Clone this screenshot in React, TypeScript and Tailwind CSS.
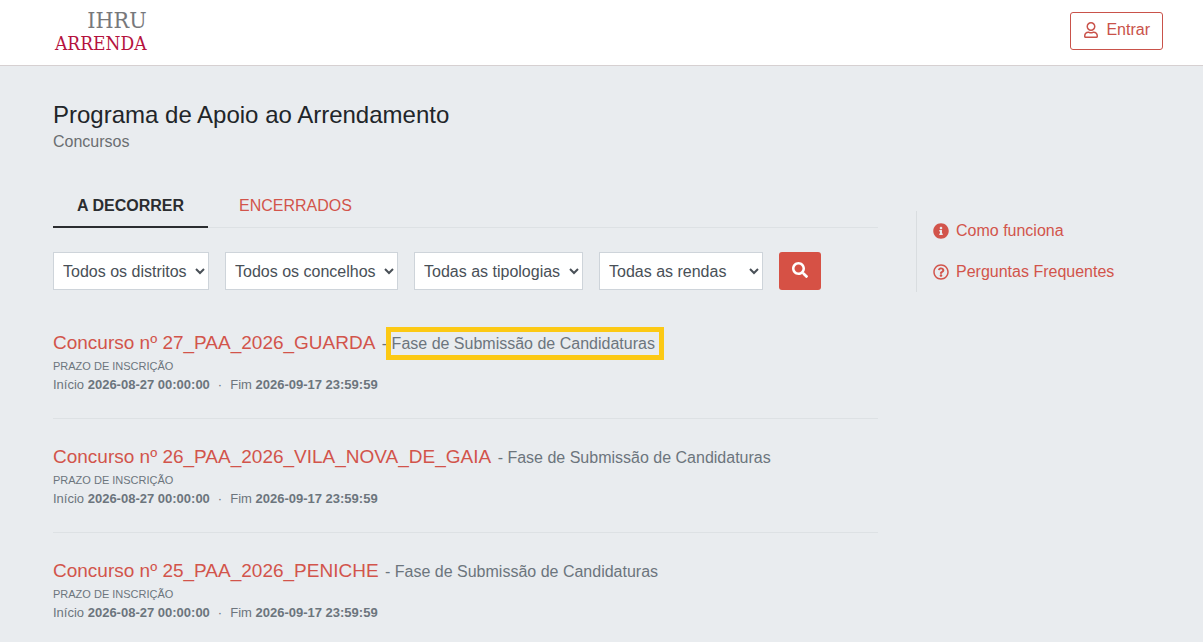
import { useState } from "react";
import {
  FaInfoCircle,
  FaRegQuestionCircle,
  FaRegUser,
  FaSearch,
} from "react-icons/fa";

type Contest = {
  name: string;
  phase: string;
  start: string;
  end: string;
  highlighted?: boolean;
};

const CONTESTS: Contest[] = [
  {
    name: "Concurso nº 27_PAA_2026_GUARDA",
    phase: "Fase de Submissão de Candidaturas",
    start: "2026-08-27 00:00:00",
    end: "2026-09-17 23:59:59",
    highlighted: true,
  },
  {
    name: "Concurso nº 26_PAA_2026_VILA_NOVA_DE_GAIA",
    phase: "Fase de Submissão de Candidaturas",
    start: "2026-08-27 00:00:00",
    end: "2026-09-17 23:59:59",
  },
  {
    name: "Concurso nº 25_PAA_2026_PENICHE",
    phase: "Fase de Submissão de Candidaturas",
    start: "2026-08-27 00:00:00",
    end: "2026-09-17 23:59:59",
  },
];

const FILTERS = [
  { label: "Distrito", all: "Todos os distritos", width: "w-[156px]" },
  { label: "Concelho", all: "Todos os concelhos", width: "w-[173px]" },
  { label: "Tipologia", all: "Todas as tipologias", width: "w-[169px]" },
  { label: "Renda", all: "Todas as rendas", width: "w-[164px]" },
];

const TABS = ["A DECORRER", "ENCERRADOS"];

function Header() {
  return (
    <header className="flex items-start justify-between border-b border-[#d6d0d1] bg-white pt-2 pr-10 pb-[11px] pl-[55px]">
      <a
        href="#"
        className="flex flex-col items-end font-['DejaVu_Serif_Condensed','Liberation_Serif',serif]"
      >
        <span className="text-[23px] leading-6 text-[#77787b]">IHRU</span>
        <span className="text-[19px] leading-[22px] text-[#b5123e]">
          ARRENDA
        </span>
      </a>
      <button
        type="button"
        className="mt-1 flex h-[38px] items-center gap-[7px] rounded-[3px] border border-[#c9524a] px-3 pb-0.5 text-[#c9524a]"
      >
        <FaRegUser />
        Entrar
      </button>
    </header>
  );
}

function Tabs() {
  const [active, setActive] = useState(TABS[0]);
  return (
    <div role="tablist" className="flex gap-[7px] border-b border-[#dde1e4]">
      {TABS.map((tab) => (
        <button
          key={tab}
          type="button"
          role="tab"
          aria-selected={tab === active}
          onClick={() => setActive(tab)}
          className={
            tab === active
              ? "-mb-px border-b-2 border-[#2b2d30] px-6 py-2 font-bold text-[#2b2d30]"
              : "-mb-px border-b-2 border-transparent px-6 py-2 text-[#d2544b]"
          }
        >
          {tab}
        </button>
      ))}
    </div>
  );
}

function Filters() {
  return (
    <form
      className="flex flex-wrap gap-4 pt-6"
      onSubmit={(e) => e.preventDefault()}
    >
      {FILTERS.map((filter) => (
        <div key={filter.label} className={filter.width}>
          <select
            aria-label={filter.label}
            className="h-[38px] w-full border border-[#ced4da] bg-white px-[5px] text-[#495057]"
          >
            <option>{filter.all}</option>
          </select>
        </div>
      ))}
      <button
        type="submit"
        aria-label="Pesquisar"
        className="flex h-[38px] w-[42px] items-center justify-center rounded-[3px] bg-[#d65145] pb-0.5 text-white"
      >
        <FaSearch />
      </button>
    </form>
  );
}

function ContestItem({ contest }: { contest: Contest }) {
  return (
    <li className="border-b border-[#dde1e4] pt-[25px] pb-[23px] text-[#6c757d] last:border-b-0">
      <h2 className="text-base leading-[26px]">
        <a href="#" className="mr-0.5 text-[19px] text-[#d2544b]">
          {contest.name}
        </a>
        {" - "}
        <span className="relative">
          {contest.phase}
          {contest.highlighted && (
            <span className="absolute -inset-y-2 -right-[9px] -left-1.5 border-5 border-[#fcc914]" />
          )}
        </span>
      </h2>
      <p className="text-[11px] leading-[18px]">PRAZO DE INSCRIÇÃO</p>
      <p className="text-[13px] leading-5">
        Início <strong>{contest.start}</strong>
        <span className="px-2">·</span>
        Fim <strong>{contest.end}</strong>
      </p>
    </li>
  );
}

function HelpLinks() {
  return (
    <aside className="mt-[25px] flex flex-col gap-[17px] self-start border-l border-[#d9dde0] py-2 pl-4 text-[#d2544b]">
      <a href="#" className="flex items-center gap-[7px]">
        <FaInfoCircle />
        Como funciona
      </a>
      <a href="#" className="flex items-center gap-[7px]">
        <FaRegQuestionCircle />
        Perguntas Frequentes
      </a>
    </aside>
  );
}

export default function App() {
  return (
    <div className="min-h-screen bg-[#e9ecef] font-['Liberation_Sans',Arial,sans-serif] text-base text-[#212529]">
      <Header />
      <main className="pt-[33px] pr-10 pl-[53px]">
        <h1 className="text-2xl leading-[31px]">
          Programa de Apoio ao Arrendamento
        </h1>
        <p className="text-[#6b6e71]">Concursos</p>
        <div className="grid grid-cols-[minmax(0,1fr)_247px] gap-[38px] pt-8">
          <section>
            <Tabs />
            <Filters />
            <ul className="pt-[15px]">
              {CONTESTS.map((contest) => (
                <ContestItem key={contest.name} contest={contest} />
              ))}
            </ul>
          </section>
          <HelpLinks />
        </div>
      </main>
    </div>
  );
}
